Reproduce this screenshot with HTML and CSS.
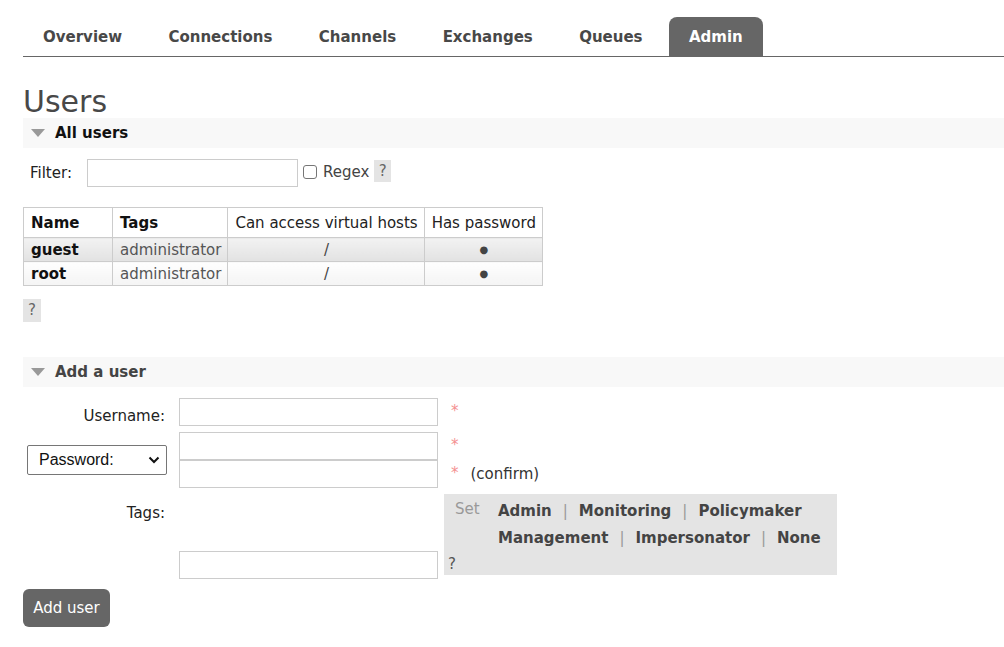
FILE: index.html
```html
<!DOCTYPE html>
<html>
<head>
<meta charset="utf-8">
<link rel="stylesheet" href="styles.css">
</head>
<body>
<div class="page">
  <ul class="tabs">
    <li class="tab">Overview</li>
    <li class="tab">Connections</li>
    <li class="tab">Channels</li>
    <li class="tab">Exchanges</li>
    <li class="tab">Queues</li>
    <li class="tab active">Admin</li>
  </ul>

  <h1 class="title">Users</h1>

  <div class="section-head"><span class="tri"></span><span class="section-title dark">All users</span></div>

  <div class="filter-row">
    <label class="filter-label">Filter:</label>
    <input class="text-input filter-input" type="text">
    <span class="check"></span>
    <span class="regex">Regex</span>
    <span class="help">?</span>
  </div>

  <table class="users">
    <thead>
      <tr>
        <th class="col-name">Name</th>
        <th>Tags</th>
        <th class="plain">Can access virtual hosts</th>
        <th class="plain">Has password</th>
      </tr>
    </thead>
    <tbody>
      <tr class="row-alt1">
        <td class="uname">guest</td>
        <td class="utags">administrator</td>
        <td class="center">/</td>
        <td class="center">&#9679;</td>
      </tr>
      <tr class="row-alt2">
        <td class="uname">root</td>
        <td class="utags">administrator</td>
        <td class="center">/</td>
        <td class="center">&#9679;</td>
      </tr>
    </tbody>
  </table>

  <div class="help-row"><span class="help help-lg">?</span></div>

  <div class="section-head add-head"><span class="tri"></span><span class="section-title">Add a user</span></div>

  <div class="form">
    <div class="form-row">
      <div class="form-label">Username:</div>
      <input class="text-input form-input" type="text">
      <span class="mand">*</span>
    </div>

    <div class="form-row pw-row">
      <div class="form-label pw-label">
        <div class="select">Password:<svg class="chev" width="12" height="8" viewBox="0 0 12 8"><path d="M1.5 1.5 L6 6 L10.5 1.5" fill="none" stroke="#111" stroke-width="2"/></svg></div>
      </div>
      <div class="pw-inputs">
        <div class="pw-line"><input class="text-input form-input" type="password"><span class="mand">*</span></div>
        <div class="pw-line"><input class="text-input form-input" type="password"><span class="mand">*</span><span class="confirm">(confirm)</span></div>
      </div>
    </div>

    <div class="form-row tags-row">
      <div class="form-label tags-label">Tags:</div>
      <input class="text-input form-input tags-input" type="text">
      <div class="tagbox">
        <div class="tag-line">
          <span class="set">Set</span>
          <span class="tag-links">
            <b>Admin</b><span class="sep">|</span><b>Monitoring</b><span class="sep">|</span><b>Policymaker</b>
          </span>
        </div>
        <div class="tag-line">
          <span class="set"></span>
          <span class="tag-links">
            <b>Management</b><span class="sep">|</span><b>Impersonator</b><span class="sep">|</span><b>None</b>
          </span>
        </div>
        <div class="tag-help">?</div>
      </div>
    </div>

    <button class="btn">Add user</button>
  </div>
</div>
</body>
</html>
```

FILE: styles.css
```css
html, body {
  margin: 0;
  padding: 0;
  background: #fff;
}
body {
  font-family: "DejaVu Sans", Verdana, sans-serif;
  font-size: 15px;
  color: #222;
}
.page {
  padding-left: 23px;
}
.tabs {
  list-style: none;
  margin: 0;
  padding: 17px 0 0 0;
  display: flex;
  gap: 6.4px;
  border-bottom: 1px solid #666;
}
.tab {
  box-sizing: border-box;
  height: 39px;
  line-height: 39px;
  padding: 1px 20px 0 20px;
  font-weight: bold;
  color: #484848;
  border-radius: 8px 8px 0 0;
}
.tab.active {
  background: #666;
  color: #fff;
}
.title {
  margin: 29px 0 0 0;
  font-size: 30px;
  line-height: 32px;
  font-weight: normal;
  color: #484848;
}
.section-head {
  height: 30px;
  background: #f8f8f8;
  display: flex;
  align-items: center;
}
.tri {
  width: 0;
  height: 0;
  margin-left: 8px;
  margin-right: 10px;
  border-left: 7px solid transparent;
  border-right: 7px solid transparent;
  border-top: 8px solid #999;
}
.section-title {
  font-weight: bold;
  color: #444;
}
.section-title.dark {
  color: #111;
}
.filter-row {
  display: flex;
  align-items: center;
  margin-top: 11px;
  height: 28px;
}
.filter-label {
  margin-left: 7px;
  width: 57px;
  color: #222;
}
.text-input {
  box-sizing: border-box;
  height: 28px;
  border: 1px solid #ccc;
  background: #fff;
  margin: 0;
  padding: 0 4px;
  font: inherit;
}
.filter-input {
  width: 211px;
}
.check {
  box-sizing: border-box;
  width: 14px;
  height: 14px;
  border: 1px solid #767676;
  border-radius: 3px;
  margin-left: 5px;
  margin-top: -2px;
}
.regex {
  margin-left: 6px;
  color: #444;
  margin-top: -3px;
}
.help {
  display: inline-block;
  background: #e4e4e4;
  color: #666;
  width: 17px;
  height: 22px;
  line-height: 22px;
  text-align: center;
  margin-left: 5px;
  margin-top: -4px;
}
.users {
  border-collapse: collapse;
  margin-top: 20px;
}
.users th, .users td {
  border: 1px solid #ccc;
  padding: 0 6px 0 7px;
  text-align: left;
  white-space: nowrap;
}
.users th {
  height: 29px;
  font-weight: bold;
  color: #111;
  background: #fff;
}
.users th.plain {
  font-weight: normal;
  color: #222;
}
.users th.col-name {
  width: 75px;
  padding-left: 7px;
}
.users td {
  height: 23px;
}
.row-alt1 td {
  background: linear-gradient(#f2f2f2, #e2e2e2);
}
.row-alt2 td {
  background: linear-gradient(#fefefe, #f4f4f4);
}
.uname {
  font-weight: bold;
  color: #111;
}
.utags {
  color: #555;
}
.users td.center {
  text-align: center;
  color: #444;
}
.users td.center:last-child {
  font-size: 10px;
}
.help-row {
  margin-top: 13px;
  height: 23px;
}
.help-lg {
  margin-left: 0;
  margin-top: 0;
  width: 18px;
  height: 23px;
  line-height: 23px;
}
.add-head {
  margin-top: 35px;
}
.form {
  margin-top: 11px;
}
.form-row {
  display: flex;
  align-items: center;
}
.form-label {
  width: 142px;
  text-align: right;
  margin-right: 14px;
  color: #222;
  padding-top: 7px;
}
.form-input {
  width: 259px;
}
.mand {
  color: #f49090;
  margin-left: 13px;
  margin-top: -2px;
}
.pw-row {
  margin-top: 6px;
}
.pw-label {
  box-sizing: border-box;
  text-align: left;
  padding-top: 0;
  padding-left: 4px;
  width: 142px;
  margin-right: 14px;
  display: flex;
}
.select {
  box-sizing: border-box;
  flex: none;
  width: 140px;
  height: 30px;
  border: 1px solid #767676;
  border-radius: 2px;
  font-family: "Liberation Sans", Arial, sans-serif;
  font-size: 16px;
  color: #111;
  display: flex;
  align-items: center;
  justify-content: space-between;
  padding: 0 6px 0 11px;
  margin-top: 0;
}
.pw-inputs {
  display: flex;
  flex-direction: column;
}
.pw-line {
  display: flex;
  align-items: center;
}
.confirm {
  margin-left: 12px;
  color: #333;
}
.tags-row {
  align-items: flex-start;
  margin-top: 6px;
}
.tags-label {
  padding-top: 10px;
}
.tags-input {
  align-self: flex-end;
  margin-bottom: -4px;
}
.tagbox {
  margin-left: 6px;
  width: 393px;
  height: 81px;
  background: #e4e4e4;
  box-sizing: border-box;
  padding: 3px 0 0 0;
}
.tag-line {
  display: flex;
  height: 27px;
  align-items: center;
}
.set {
  width: 43px;
  padding-left: 11px;
  color: #999;
  margin-top: -3px;
}
.tag-links b {
  color: #444;
}
.sep {
  color: #999;
  margin: 0 11px;
}
.tag-help {
  padding-left: 4px;
  color: #555;
  margin-top: 4px;
}
.btn {
  margin-top: 14px;
  width: 87px;
  height: 38px;
  background: #666;
  color: #fff;
  border: none;
  border-radius: 6px;
  font-family: "DejaVu Sans", Verdana, sans-serif;
  font-size: 15px;
  padding: 0;
}
```
